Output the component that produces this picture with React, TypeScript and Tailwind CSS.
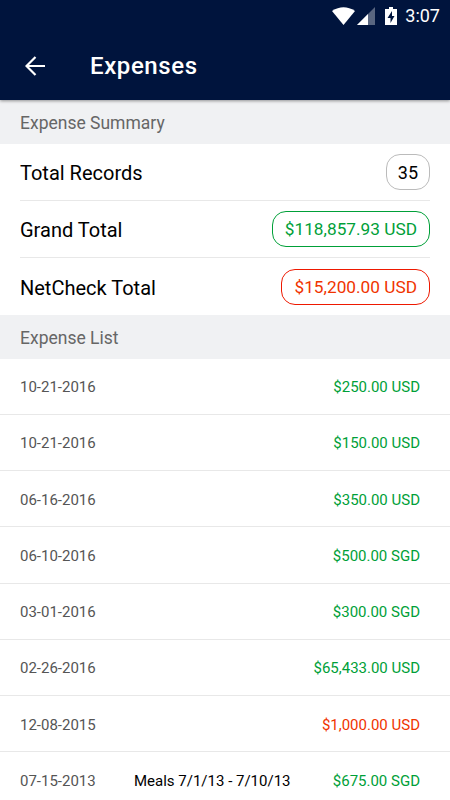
const rows = [
  ["10-21-2016", "", "$250.00 USD", "text-[#00a038]"],
  ["10-21-2016", "", "$150.00 USD", "text-[#00a038]"],
  ["06-16-2016", "", "$350.00 USD", "text-[#00a038]"],
  ["06-10-2016", "", "$500.00 SGD", "text-[#00a038]"],
  ["03-01-2016", "", "$300.00 SGD", "text-[#00a038]"],
  ["02-26-2016", "", "$65,433.00 USD", "text-[#00a038]"],
  ["12-08-2015", "", "$1,000.00 USD", "text-[#f03400]"],
  ["07-15-2013", "Meals 7/1/13 - 7/10/13", "$675.00 SGD", "text-[#00a038]"],
];

const totals = [
  ["Total Records", "35", "text-black border-[#bbb] px-[11px] text-[18px]"],
  ["Grand Total", "$118,857.93 USD", "text-[#00a038] border-[#00a038] px-[12px] text-[17.250px]"],
  ["NetCheck Total", "$15,200.00 USD", "text-[#f03400] border-[#ee1800] px-[12px] text-[17.250px]"],
];

export default function App() {
  return (
    <div className="h-[800px] w-[450px] overflow-hidden bg-white font-['Roboto',sans-serif]">
      <header className="relative h-[100px] bg-[#00143d] text-white shadow-[0_1px_3px_rgba(0,0,0,0.4)]">
        <div className="flex h-[31px] items-center justify-end pr-[10px]">
          <svg className="mr-[1.500px] h-[18px] w-[23px]" viewBox="0 0 23 18" fill="currentColor"><path d="M0 4Q11.500-3.500 23 4L11.500 18Z" /></svg>
          <svg className="mr-[10.500px] h-[18px] w-[18px]" viewBox="0 0 18 18" fill="currentColor"><path opacity=".35" d="M0 18L18 0V18Z" /><path d="M0 18L11 7V18Z" /></svg>
          <svg className="mr-[8px] h-[18px] w-[12px]" viewBox="0 0 12 18"><path fill="#fff" d="M4 0h4v2h4v16H0V2h4Z" /><path fill="#00143d" d="M7 4L2.500 11H5.500V16L9.500 9H7Z" /></svg>
          <span className="text-[18px]">3:07</span>
        </div>
        <div className="flex h-[69px] items-center pl-[25px]">
          <svg className="h-5 w-5" viewBox="0 0 20 20" fill="none" stroke="currentColor" strokeWidth="2.200"><path d="M20 10H2M10.500 1L1.500 10L10.500 19" /></svg>
          <h1 className="ml-[45px] text-[24px] font-medium tracking-[0.600px]">Expenses</h1>
        </div>
      </header>
      <h2 className="flex h-[43.500px] items-center bg-[#f0f1f3] px-5 pt-[3px] text-[17.500px] text-[#666]">Expense Summary</h2>
      <section className="px-5">
        {totals.map(([label, value, tone], i) => (
          <div key={label} className={`flex h-[57.300px] items-center justify-between text-[20px] text-black ${i < 2 ? "border-b border-[#e8e8e8]" : ""}`}>
            <span className="pt-[2px]">{label}</span>
            <span className={`flex h-9 items-center rounded-[14px] border pt-[2px] ${tone}`}>{value}</span>
          </div>
        ))}
      </section>
      <h2 className="flex h-[43.300px] items-center bg-[#f0f1f3] px-5 pt-[2px] text-[17.500px] text-[#666]">Expense List</h2>
      <section>
        {rows.map(([date, note, amount, tone], i) => (
          <div key={i} className="flex h-[56.250px] items-center border-b border-[#e8e8e8] pl-5 pr-[30px] pt-[2px] text-[15px]">
            <span className="w-[114px] text-[#555]">{date}</span>
            <span className="text-black">{note}</span>
            <span className={`ml-auto ${tone}`}>{amount}</span>
          </div>
        ))}
      </section>
    </div>
  );
}
